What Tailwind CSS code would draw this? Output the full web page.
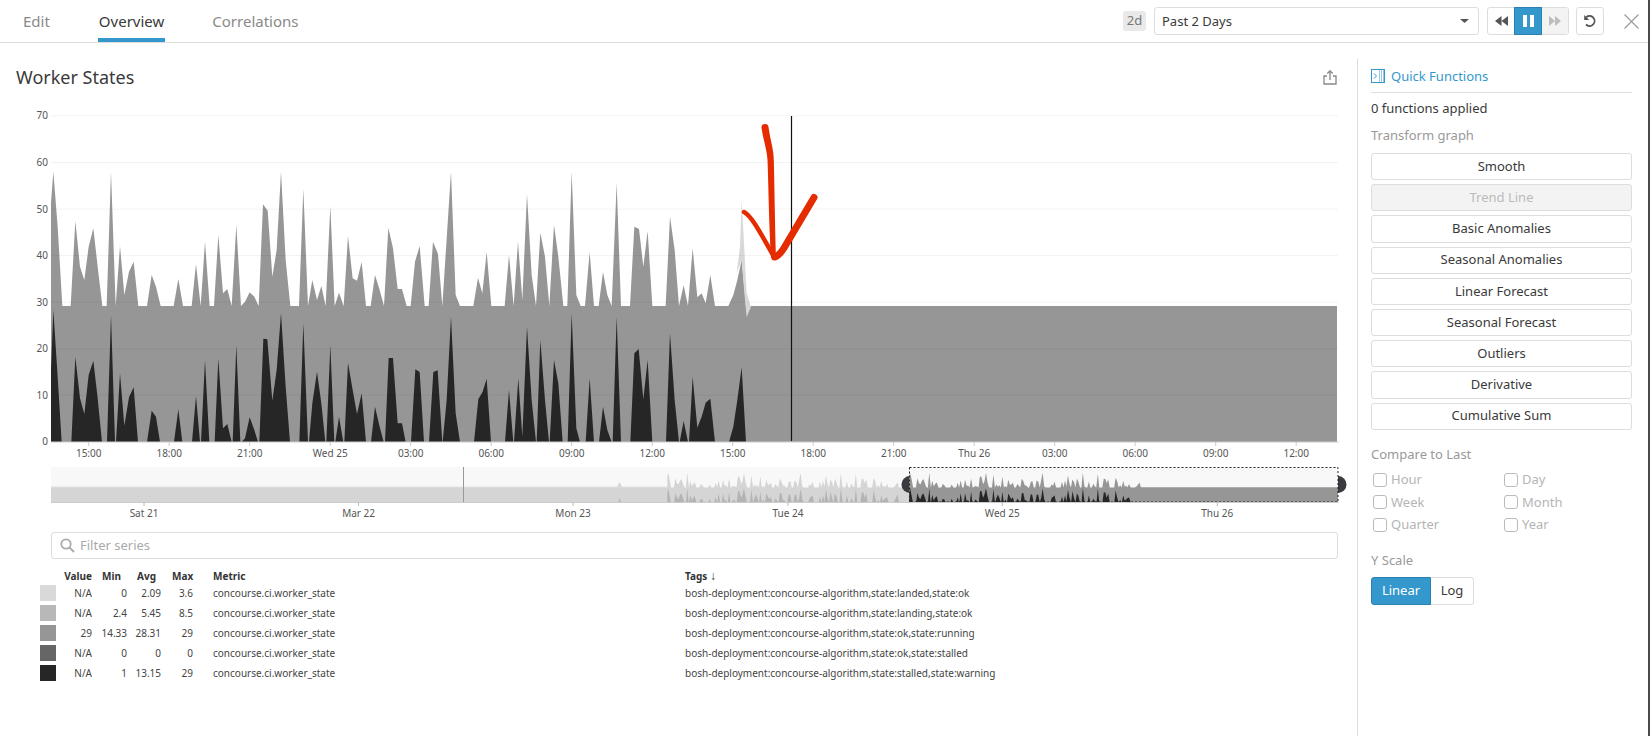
<!DOCTYPE html>
<html lang="en">
<head>
    <meta charset="UTF-8">
    <title>Worker States</title>
    <script src="https://cdn.jsdelivr.net/npm/@tailwindcss/browser@4"></script>
</head>
<body class="bg-white">
<div class="w-[1650px] h-[736px] overflow-hidden flex flex-col font-['Noto_Sans',sans-serif] text-[13px] text-[#3a3a3a] border-r-2 border-[#4a4a4a]">

    <!-- top bar -->
    <header class="h-[43px] shrink-0 flex items-stretch border-b border-[#dedede] pr-[9px]">
        <nav class="flex text-[15px] text-[#8a8a8a]">
            <a class="ml-[23px] pt-[10px]">Edit</a>
            <a class="ml-[48px] h-[42px] pt-[10px] px-px text-[#3a3a3a] border-b-4 border-[#3498cd]">Overview</a>
            <a class="ml-[47px] pt-[10px]">Correlations</a>
        </nav>
        <div class="ml-auto flex items-center">
            <span class="w-[23px] h-[20px] flex items-center justify-center rounded-[3px] bg-[#e9e9e9] text-[#777]">2d</span>
            <div class="ml-[8px] w-[325px] h-[28px] flex items-center justify-between pl-[7px] pr-[9px] border border-[#ddd] rounded-[3px]">
                <span class="pt-px">Past 2 Days</span>
                <svg class="w-[9px] h-[4px]" viewBox="0 0 9 4"><path d="M0 0h9L4.5 4z" fill="#555"/></svg>
            </div>
            <div class="ml-[8px] w-[82px] h-[28px] flex border border-[#ddd] rounded-[3px]">
                <button class="w-[26px] flex items-center justify-center">
                    <svg class="w-[13px] h-[10px]" viewBox="0 0 13 10"><path d="M6.500 0v10L0 5zM13 0v10L6.500 5z" fill="#555"/></svg>
                </button>
                <button class="w-[28px] -my-px flex items-center justify-center gap-[3px] bg-[#3498cd] border border-[#2a80b0]">
                    <span class="w-[4px] h-[12px] bg-white"></span><span class="w-[4px] h-[12px] bg-white"></span>
                </button>
                <button class="flex-1 flex items-center justify-center bg-[#f3f3f3]">
                    <svg class="w-[12px] h-[10px]" viewBox="0 0 12 10"><path d="M0 0v10l6-5zM6 0v10l6-5z" fill="#bdbdbd"/></svg>
                </button>
            </div>
            <button class="ml-[7px] w-[28px] h-[28px] flex items-center justify-center border border-[#ddd] rounded-[3px]">
                <svg class="w-[14px] h-[14px]" viewBox="0 0 14 14" fill="none"><path d="M3.300 3.200A5 5 0 1 1 3 10.500" stroke="#555" stroke-width="1.800"/><path d="M1.200 1v5h5z" fill="#555"/></svg>
            </button>
            <svg class="ml-[20px] w-[15px] h-[15px]" viewBox="0 0 15 15"><path d="M.5.5l14 14M14.500.5l-14 14" stroke="#999" stroke-width="1.100"/></svg>
        </div>
    </header>

    <div class="flex flex-1 min-h-0">
        <main class="w-[1357px] shrink-0">
            <div class="flex justify-between pl-[16px] pr-[20px] pt-[21px] h-[62px]">
                <h1 class="text-[18px] leading-[26px] text-[#3a3a3a]">Worker States</h1>
                <svg class="w-[14px] h-[15px] mt-[6px]" viewBox="0 0 14 15" fill="none" stroke="#888" stroke-width="1.300"><path d="M4 6H1v8h12V6h-3"/><path d="M7 10V1M4.300 3.500L7 .8l2.700 2.700"/></svg>
            </div>

            <!-- chart, user units are page pixels -->
            <svg class="block w-[1357px] h-[420px] font-['Noto_Sans',sans-serif]" viewBox="0 105 1357 420">
                <defs>
                    <polygon id="running" points="18,846 18,130 25,35 38,200 52,438 77,438 91,183 105,320 118,360 131,260 145,205 158,320 172,438 185,438 198,35 212,438 225,258 238,405 252,335 266,305 280,438 306,438 320,345 333,380 347,438 386,438 400,357 414,438 440,438 453,312 467,438 480,245 494,438 507,438 520,225 534,400 547,387 560,438 574,195 588,438 600,425 614,397 628,410 641,438 654,133 668,152 682,350 695,270 708,35 722,300 736,438 762,438 775,87 789,438 802,360 816,420 829,378 842,438 856,138 869,438 882,398 896,438 909,228 923,355 936,362 950,306 963,438 977,438 990,345 1004,390 1017,438 1030,203 1044,265 1058,387 1071,387 1085,438 1097,438 1110,305 1124,258 1139,438 1151,438 1164,245 1179,282 1192,438 1218,35 1232,405 1245,438 1285,438 1299,353 1312,400 1325,276 1339,438 1379,438 1392,285 1406,438 1419,245 1432,420 1446,102 1460,345 1473,438 1486,218 1500,290 1513,438 1527,195 1540,290 1555,438 1567,438 1580,35 1594,405 1607,438 1620,438 1634,277 1647,438 1661,438 1674,336 1687,405 1700,438 1715,70 1728,438 1755,438 1768,200 1782,207 1795,320 1808,213 1822,438 1862,438 1875,170 1889,270 1902,438 1916,376 1929,438 1943,265 1957,412 1970,400 1982,430 1996,345 2010,438 2050,438 2065,405 2077,360 2090,300 2103,438 3876,438 3876,846"/>
                    <polygon id="stalled" points="18,846 18,630 25,450 38,650 50,846 79,846 91,590 105,715 118,762 131,645 145,602 158,715 171,846 186,846 198,465 210,846 213,846 225,640 238,797 252,712 266,682 279,846 306,846 320,752 333,770 345,846 387,846 400,748 412,846 441,846 453,708 465,846 468,846 480,600 493,846 509,846 520,595 534,805 547,792 560,846 563,846 574,555 586,846 590,846 600,835 614,772 628,810 639,846 643,846 655,536 667,538 682,722 695,630 708,460 722,680 735,846 763,846 775,490 789,846 792,846 802,730 816,635 829,730 841,846 844,846 856,555 868,846 871,846 882,770 895,846 898,846 909,608 923,690 936,762 950,700 963,846 978,846 990,740 1004,800 1016,846 1020,846 1031,594 1044,594 1058,790 1071,790 1082,846 1098,846 1111,628 1124,636 1137,846 1152,846 1165,636 1178,631 1192,846 1193,846 1205,720 1218,470 1232,760 1245,846 1287,846 1300,718 1313,695 1325,656 1338,846 1380,846 1392,690 1405,846 1407,846 1420,655 1432,830 1446,500 1460,720 1473,846 1475,846 1486,540 1500,720 1512,846 1514,846 1527,600 1540,670 1553,846 1568,846 1580,460 1594,805 1605,846 1622,846 1634,655 1647,846 1662,846 1674,740 1687,810 1700,846 1703,846 1715,470 1728,846 1756,846 1768,580 1781,567 1795,718 1808,600 1822,846 1863,846 1875,520 1889,720 1902,846 1904,846 1916,783 1929,846 1932,846 1943,650 1957,803 1970,770 1982,728 1996,716 2010,846 2052,846 2065,800 2077,720 2090,622 2103,846"/>
                </defs>

                <!-- main plot -->
                <g transform="translate(45 160) scale(.33333)">
                    <use href="#running" fill="#969696"/>
                    <use href="#stalled" fill="#262626"/>
                    <polygon points="2075,340 2085,260 2090,120 2097,250 2105,400 2118,440 2105,472 2100,420 2090,300" fill="#d8d8d8"/>
                </g>
                <g stroke="#000" stroke-opacity=".05">
                    <path d="M51 115.800H1338M51 162.500H1338M51 209.100H1338M51 255.600H1338M51 302.100H1338M51 348.700H1338M51 395.200H1338"/>
                </g>
                <path d="M791.500 116V441" stroke="#111" stroke-width="1.200"/>
                <path d="M51 442H1338.500" stroke="#ccc"/>
                <path d="M88.700 442v4M169.200 442v4M249.700 442v4M330.200 442v4M410.700 442v4M491.200 442v4M571.700 442v4M652.200 442v4M732.700 442v4M813.200 442v4M893.700 442v4M974.200 442v4M1054.700 442v4M1135.200 442v4M1215.700 442v4M1296.200 442v4" stroke="#ccc"/>

                <g font-size="10" fill="#555" text-anchor="end">
                    <text x="48" y="119.300">70</text><text x="48" y="166">60</text><text x="48" y="212.600">50</text><text x="48" y="259.100">40</text><text x="48" y="305.600">30</text><text x="48" y="352.200">20</text><text x="48" y="398.700">10</text><text x="48" y="445.200">0</text>
                </g>
                <g font-size="10" fill="#555" text-anchor="middle">
                    <text x="88.700" y="457">15:00</text><text x="169.200" y="457">18:00</text><text x="249.700" y="457">21:00</text><text x="330.200" y="457">Wed 25</text><text x="410.700" y="457">03:00</text><text x="491.200" y="457">06:00</text><text x="571.700" y="457">09:00</text><text x="652.200" y="457">12:00</text><text x="732.700" y="457">15:00</text><text x="813.200" y="457">18:00</text><text x="893.700" y="457">21:00</text><text x="974.200" y="457">Thu 26</text><text x="1054.700" y="457">03:00</text><text x="1135.200" y="457">06:00</text><text x="1215.700" y="457">09:00</text><text x="1296.200" y="457">12:00</text>
                </g>

                <!-- navigator -->
                <rect x="51" y="467" width="1287" height="35.300" fill="#f8f8f8"/>
                <rect x="51" y="487" width="620" height="15.300" fill="#d5d5d5"/>
                <path d="M51 487H671" stroke="#e2e2e2"/>
                <g transform="translate(667.300 502.300) scale(.11111 .03645) translate(-18 -846)">
                    <use href="#running" fill="#d5d5d5"/>
                    <use href="#stalled" fill="#b4b4b4"/>
                </g>
                <polygon points="617,487 619.500,482 622,487" fill="#d5d5d5"/>
                <polygon points="618.500,502 619.500,498 621,502" fill="#b4b4b4"/>
                <path d="M463.500 467V502" stroke="#999"/>
                <circle cx="910" cy="484.500" r="8.500" fill="#3a3a40"/>
                <circle cx="1338" cy="484.500" r="8.500" fill="#3a3a40"/>
                <rect x="909.500" y="467.500" width="428.500" height="34.500" fill="#f8f8f8"/>
                <g transform="translate(909.300 502.300) scale(.11111 .03645) translate(-18 -846)">
                    <use href="#running" fill="#969696"/>
                    <use href="#stalled" fill="#262626"/>
                </g>
                <rect x="1135" y="487.500" width="203" height="14.800" fill="#969696"/>
                <rect x="909.500" y="467.500" width="428.500" height="34.500" fill="none" stroke="#222" stroke-dasharray="2 2"/>
                <path d="M51 502.500H1338.500" stroke="#ccc"/>
                <path d="M144 502v4M358.600 502v4M573 502v4M788 502v4M1002.300 502v4M1217.300 502v4" stroke="#bbb"/>
                <g font-size="10" fill="#555" text-anchor="middle">
                    <text x="144" y="517">Sat 21</text><text x="358.600" y="517">Mar 22</text><text x="573" y="517">Mon 23</text><text x="788" y="517">Tue 24</text><text x="1002.300" y="517">Wed 25</text><text x="1217.300" y="517">Thu 26</text>
                </g>

                <!-- hand drawn arrow -->
                <path d="M761.500 128a3.500 3.500 0 0 1 7-1C770.500 141 773.800 150 773.800 160C774.500 185 775 225 776 256L771 256C769 225 768.500 185 767.500 160C767 150 763.500 141 761.500 128z" fill="#e52b00"/>
                <g fill="none" stroke="#e52b00" stroke-linecap="round" stroke-linejoin="round">
                    <path d="M814 197.500L784 248Q779 256 774.500 257" stroke-width="7"/>
                    <path d="M744 212C752 216 762 236 773 255" stroke-width="4.500"/>
                </g>
            </svg>

            <div class="ml-[51px] mt-[7px] w-[1287px] h-[27px] flex items-center border border-[#ddd] rounded-[3px] pl-[8px]">
                <svg class="w-[15px] h-[15px]" viewBox="0 0 15 15" fill="none" stroke="#aaa" stroke-width="1.800"><circle cx="6" cy="6" r="4.700"/><path d="M9.500 9.500l4.500 4.500"/></svg>
                <span class="ml-[5px] text-[#aaa]">Filter series</span>
            </div>

            <!-- legend -->
            <div class="mt-[9px] text-[10px] leading-[20px] text-[#444]">
                <div class="h-[15px] leading-[16px] grid grid-cols-[56px_36px_35px_34px_32px_492px_1fr] font-bold text-[#333]">
                    <span></span><span class="text-right">Value</span><span class="pl-[10px]">Min</span><span class="pl-[10px]">Avg</span><span class="pl-[11px]">Max</span><span class="pl-[20px]">Metric</span><span>Tags <span class="text-[12px] font-normal">↓</span></span>
                </div>
                <div class="grid grid-cols-[56px_36px_35px_34px_32px_492px_1fr]">
                    <span class="ml-[40px] my-[2px] h-[16px] bg-[#d9d9d9]"></span><span class="text-right">N/A</span><span class="text-right">0</span><span class="text-right">2.09</span><span class="text-right">3.6</span><span class="pl-[20px]">concourse.ci.worker_state</span><span>bosh-deployment:concourse-algorithm,state:landed,state:ok</span>
                    <span class="ml-[40px] my-[2px] h-[16px] bg-[#b8b8b8]"></span><span class="text-right">N/A</span><span class="text-right">2.4</span><span class="text-right">5.45</span><span class="text-right">8.5</span><span class="pl-[20px]">concourse.ci.worker_state</span><span>bosh-deployment:concourse-algorithm,state:landing,state:ok</span>
                    <span class="ml-[40px] my-[2px] h-[16px] bg-[#969696]"></span><span class="text-right">29</span><span class="text-right">14.33</span><span class="text-right">28.31</span><span class="text-right">29</span><span class="pl-[20px]">concourse.ci.worker_state</span><span>bosh-deployment:concourse-algorithm,state:ok,state:running</span>
                    <span class="ml-[40px] my-[2px] h-[16px] bg-[#666666]"></span><span class="text-right">N/A</span><span class="text-right">0</span><span class="text-right">0</span><span class="text-right">0</span><span class="pl-[20px]">concourse.ci.worker_state</span><span>bosh-deployment:concourse-algorithm,state:ok,state:stalled</span>
                    <span class="ml-[40px] my-[2px] h-[16px] bg-[#262626]"></span><span class="text-right">N/A</span><span class="text-right">1</span><span class="text-right">13.15</span><span class="text-right">29</span><span class="pl-[20px]">concourse.ci.worker_state</span><span>bosh-deployment:concourse-algorithm,state:stalled,state:warning</span>
                </div>
            </div>
        </main>

        <!-- quick functions -->
        <aside class="mt-[16px] flex-1 border-l border-[#dedede] pl-[13px] pr-[16px]">
            <div class="h-[34px] flex items-center border-b border-[#dedede] text-[#3498cd]">
                <svg class="w-[14px] h-[14px] mt-px" viewBox="0 0 14 14" fill="none" stroke="#3498cd"><rect x=".5" y=".5" width="13" height="13"/><path d="M3 4.500L5.500 7 3 9.500"/><path d="M8.500 1v12M10.500 1v12M12.500 1v12" stroke-opacity=".5"/></svg>
                <span class="ml-[6px] pt-[2px]">Quick Functions</span>
            </div>
            <p class="mt-[5px] leading-[20px]">0 functions applied</p>
            <p class="mt-[7px] leading-[20px] text-[#999]">Transform graph</p>
            <div class="mt-[8px] flex flex-col gap-[4px]">
                <button class="h-[27.200px] border border-[#ddd] rounded-[3px]">Smooth</button>
                <button class="h-[27.200px] border border-[#ddd] rounded-[3px] bg-[#f3f3f3] text-[#bbb]">Trend Line</button>
                <button class="h-[27.200px] border border-[#ddd] rounded-[3px]">Basic Anomalies</button>
                <button class="h-[27.200px] border border-[#ddd] rounded-[3px]">Seasonal Anomalies</button>
                <button class="h-[27.200px] border border-[#ddd] rounded-[3px]">Linear Forecast</button>
                <button class="h-[27.200px] border border-[#ddd] rounded-[3px]">Seasonal Forecast</button>
                <button class="h-[27.200px] border border-[#ddd] rounded-[3px]">Outliers</button>
                <button class="h-[27.200px] border border-[#ddd] rounded-[3px]">Derivative</button>
                <button class="h-[27.200px] border border-[#ddd] rounded-[3px]">Cumulative Sum</button>
            </div>
            <p class="mt-[14px] leading-[20px] text-[#999]">Compare to Last</p>
            <div class="mt-[5px] grid grid-cols-[131px_1fr] auto-rows-[22.500px] text-[#b5b5b5]">
                <label class="flex items-center"><span class="ml-[2px] w-[14px] h-[14px] border border-[#bbb] rounded-[3px]"></span><span class="ml-[4px]">Hour</span></label>
                <label class="flex items-center"><span class="ml-[2px] w-[14px] h-[14px] border border-[#bbb] rounded-[3px]"></span><span class="ml-[4px]">Day</span></label>
                <label class="flex items-center"><span class="ml-[2px] w-[14px] h-[14px] border border-[#bbb] rounded-[3px]"></span><span class="ml-[4px]">Week</span></label>
                <label class="flex items-center"><span class="ml-[2px] w-[14px] h-[14px] border border-[#bbb] rounded-[3px]"></span><span class="ml-[4px]">Month</span></label>
                <label class="flex items-center"><span class="ml-[2px] w-[14px] h-[14px] border border-[#bbb] rounded-[3px]"></span><span class="ml-[4px]">Quarter</span></label>
                <label class="flex items-center"><span class="ml-[2px] w-[14px] h-[14px] border border-[#bbb] rounded-[3px]"></span><span class="ml-[4px]">Year</span></label>
            </div>
            <p class="mt-[14px] leading-[20px] text-[#999]">Y Scale</p>
            <div class="mt-[7px] w-[103px] h-[28px] flex">
                <span class="w-[60px] flex items-center justify-center rounded-l-[3px] bg-[#3498cd] border border-[#2a80b0] text-white">Linear</span>
                <span class="flex-1 flex items-center justify-center rounded-r-[3px] border border-l-0 border-[#ddd]">Log</span>
            </div>
        </aside>
    </div>
</div>
</body>
</html>
